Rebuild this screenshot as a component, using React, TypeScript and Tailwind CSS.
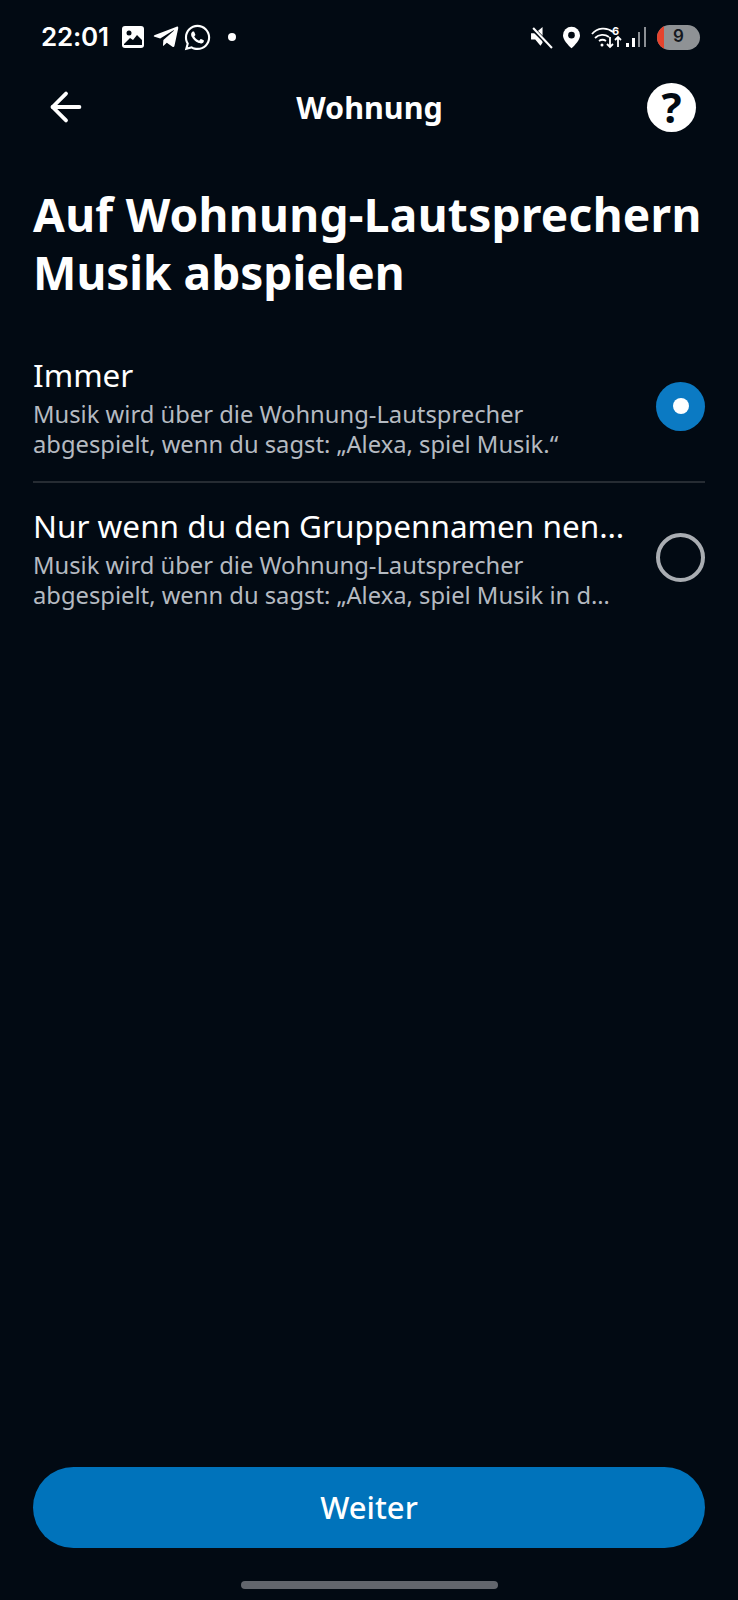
import { ArrowLeft } from 'lucide-react'
import { FaWhatsapp, FaTelegramPlane } from 'react-icons/fa'

const font = { fontFamily: '"Noto Sans", sans-serif' }

function StatusBar() {
  return (
    <div className="flex h-[74px] items-center pl-[41px] pr-[38px] text-white">
      <span className="w-[70px] text-[26px] font-semibold leading-none tracking-[-0.2px]" style={{ fontFamily: 'Inter, sans-serif' }}>22:01</span>
      <div className="ml-[11px] flex items-center">
        <svg width="22" height="22" viewBox="0 0 22 22">
          <rect x="0" y="0" width="22" height="22" rx="3" fill="#fff" />
          <circle cx="7" cy="7" r="2.5" fill="#020a13" />
          <path d="M2 18 L8 12 L11 14 L15 9 L20 14 V19 H2 Z" fill="#020a13" />
        </svg>
        <FaTelegramPlane className="ml-[8px] text-[28px]" />
        <FaWhatsapp className="ml-[3px] text-[29px]" />
        <span className="ml-[16px] h-[8px] w-[8px] rounded-full bg-white" />
      </div>
      <div className="ml-auto flex items-center">
        <svg width="23" height="23" viewBox="0 0 22 22" fill="#fff">
          <path d="M1 7h4l7-6v15l-2 3-5-6H1z" />
          <path d="M2 2 L21 21" stroke="#020a13" strokeWidth="4" />
          <path d="M3 2 L21 21" stroke="#fff" strokeWidth="2" />
        </svg>
        <svg className="ml-[10px]" width="17" height="23" viewBox="0 0 18 23">
          <path d="M9 0a9 9 0 0 1 9 9c0 5-5 10-9 14-4-4-9-9-9-14a9 9 0 0 1 9-9z" fill="#fff" />
          <circle cx="9" cy="9" r="3.5" fill="#020a13" />
        </svg>
        <svg className="ml-[11px]" width="31" height="24" viewBox="0 0 31 24" fill="none" stroke="#fff">
          <path d="M1 9a15 15 0 0 1 21-2" strokeWidth="1.8" />
          <path d="M4 13a11 11 0 0 1 14-1" strokeWidth="1.8" />
          <path d="M8 16a6 6 0 0 1 7 0" strokeWidth="1.8" />
          <circle cx="11" cy="20" r="1.5" fill="#fff" stroke="none" />
          <path d="M19 12v10M16 19l3 3 3-3" strokeWidth="1.8" />
          <path d="M27 22V12M24 15l3-3 3 3" strokeWidth="1.8" />
          <text x="21" y="10" fontSize="11" fontWeight="700" fill="#fff" stroke="none" fontFamily="Inter, sans-serif">6</text>
        </svg>
        <svg className="ml-[3px]" width="22" height="22" viewBox="0 0 22 22">
          <rect x="1" y="17" width="3" height="4" fill="#fff" />
          <rect x="7" y="12" width="3" height="9" fill="#fff" />
          <rect x="13" y="6" width="2" height="15" fill="#8b8f94" />
          <rect x="19" y="1" width="2" height="20" fill="#8b8f94" />
        </svg>
        <div className="relative ml-[10px] flex h-[25px] w-[43px] items-center justify-center overflow-hidden rounded-full bg-[#8f9295]">
          <span className="absolute left-0 top-0 h-full w-[7px] bg-[#e5432d]" />
          <span className="text-[17px] font-semibold text-[#14181d]" style={{ fontFamily: 'Inter, sans-serif' }}>9</span>
        </div>
      </div>
    </div>
  )
}

function Header() {
  return (
    <div className="grid h-[66px] grid-cols-[1fr_auto_1fr] items-center pl-[43px] pr-[42px] text-white">
      <ArrowLeft size={46} strokeWidth={2} />
      <h2 className="text-[30.5px] font-bold leading-none">Wohnung</h2>
      <div className="flex h-[49px] w-[49px] items-center justify-center justify-self-end rounded-full bg-white">
        <span className="text-[42px] font-bold leading-none text-[#020a13]">?</span>
      </div>
    </div>
  )
}

function Option({ title, line1, line2, selected }: { title: string; line1: string; line2: string; selected?: boolean }) {
  return (
    <div className="flex items-center justify-between">
      <div className="w-[600px]">
        <p className="whitespace-nowrap text-[31.5px] leading-[40px] text-white">{title}</p>
        <p className="mt-[4px] whitespace-nowrap text-[23.75px] leading-[30px] text-[#b5bac1]">{line1}</p>
        <p className="whitespace-nowrap text-[23.75px] leading-[30px] text-[#b5bac1]">{line2}</p>
      </div>
      {selected ? (
        <div className="mb-[2px] flex h-[49px] w-[49px] items-center justify-center rounded-full bg-[#0b7ac3]">
          <span className="h-[16px] w-[16px] rounded-full bg-white" />
        </div>
      ) : (
        <div className="mb-[2px] h-[49px] w-[49px] rounded-full border-[4px] border-[#a9adb2]" />
      )}
    </div>
  )
}

export default function App() {
  return (
    <div className="flex h-[1600px] w-[738px] flex-col overflow-hidden bg-[#020a13]" style={font}>
      <StatusBar />
      <Header />
      <div className="px-[33px]">
        <h1 className="mt-[45px] whitespace-nowrap text-[46px] font-bold leading-[58px] text-white">
          <span className="tracking-[0.3px]">Auf Wohnung-Lautsprechern</span>
          <br />
          Musik abspielen
        </h1>
        <div className="mt-[54px] border-b-2 border-[#262c33] pb-[22px]">
          <Option
            selected
            title="Immer"
            line1="Musik wird über die Wohnung-Lautsprecher"
            line2="abgespielt, wenn du sagst: „Alexa, spiel Musik.“"
          />
        </div>
        <div className="mt-[23px]">
          <Option
            title="Nur wenn du den Gruppennamen nen…"
            line1="Musik wird über die Wohnung-Lautsprecher"
            line2="abgespielt, wenn du sagst: „Alexa, spiel Musik in d…"
          />
        </div>
      </div>
      <div className="mt-auto px-[33px]">
        <button className="flex h-[81px] w-full items-center justify-center rounded-full bg-[#0073bb] text-[31px] font-medium text-white">
          Weiter
        </button>
        <div className="mx-auto mb-[11px] mt-[33px] h-[8px] w-[257px] rounded-full bg-[#62666d]" />
      </div>
    </div>
  )
}
